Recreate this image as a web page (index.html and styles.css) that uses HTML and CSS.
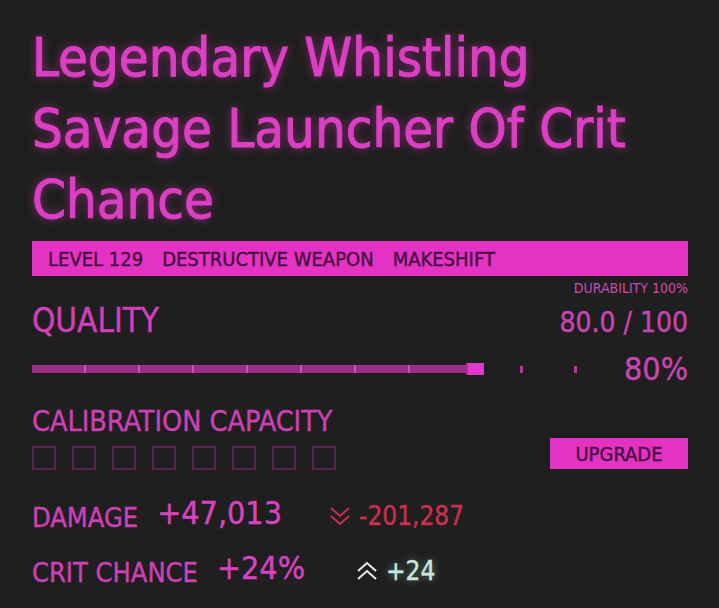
FILE: index.html
```html
<!DOCTYPE html>
<html>
<head>
<meta charset="utf-8">
<link rel="stylesheet" href="styles.css">
</head>
<body>
<div class="card">
  <h1 class="title">Legendary Whistling Savage Launcher Of Crit Chance</h1>
  <div class="tagbar"><span>LEVEL 129</span><span>DESTRUCTIVE WEAPON</span><span>MAKESHIFT</span></div>
  <div class="durability">DURABILITY 100%</div>
  <div class="quality-row">
    <div class="quality-label">QUALITY</div>
    <div class="quality-value">80.0 / 100</div>
  </div>
  <div class="progress-row">
    <div class="track">
      <div class="seg"></div><div class="tick"></div>
      <div class="seg"></div><div class="tick"></div>
      <div class="seg"></div><div class="tick"></div>
      <div class="seg"></div><div class="tick"></div>
      <div class="seg"></div><div class="tick"></div>
      <div class="seg"></div><div class="tick"></div>
      <div class="seg"></div><div class="tick"></div>
      <div class="seg last"></div>
      <div class="knob"></div>
      <div class="empty-tick first"></div>
      <div class="empty-tick"></div>
    </div>
    <div class="percent">80%</div>
  </div>
  <div class="calib-row">
    <div class="calib-left">
      <div class="calib-label">CALIBRATION CAPACITY</div>
      <div class="slots">
        <div class="slot"></div><div class="slot"></div><div class="slot"></div><div class="slot"></div>
        <div class="slot"></div><div class="slot"></div><div class="slot"></div><div class="slot"></div>
      </div>
    </div>
    <div class="upgrade">UPGRADE</div>
  </div>
  <div class="stat damage">
    <span class="stat-label">DAMAGE</span>
    <span class="stat-value">+47,013</span>
    <span class="delta down">
      <svg class="chev" width="22" height="22" viewBox="0 0 22 22"><path d="M2 3 L11 11 L20 3 M2 11 L11 19 L20 11" fill="none" stroke="currentColor" stroke-width="2"/></svg>
      -201,287
    </span>
  </div>
  <div class="stat crit">
    <span class="stat-label">CRIT CHANCE</span>
    <span class="stat-value">+24%</span>
    <span class="delta up">
      <svg class="chev" width="22" height="22" viewBox="0 0 22 22"><path d="M2 11 L11 3 L20 11 M2 19 L11 11 L20 19" fill="none" stroke="currentColor" stroke-width="2"/></svg>
      <span class="up-text">+24</span>
    </span>
  </div>
</div>
</body>
</html>
```
FILE: styles.css
```css
html, body {
  margin: 0;
  padding: 0;
  background: #1f1f1f;
}
body {
  font-family: "DejaVu Sans Condensed", "Liberation Sans Narrow", "DejaVu Sans", sans-serif;
  width: 719px;
  height: 608px;
  overflow: hidden;
  -webkit-text-stroke: 0.4px currentColor;
}
.card {
  padding: 22px 31px 0 32px;
}
.title {
  margin: 0;
  font-weight: normal;
  font-size: 54px;
  line-height: 71px;
  letter-spacing: 0;
  color: #dc3fc3;
  -webkit-text-stroke: 1px #dc3fc3;
  text-shadow: 0 0 10px rgba(214, 50, 180, 0.65);
}
.tagbar {
  margin-top: 6px;
  height: 35px;
  background: #e332c4;
  display: flex;
  align-items: center;
  gap: 19px;
  padding-left: 16px;
  font-size: 20px;
  color: #45103c;
}
.durability {
  text-align: right;
  font-size: 14px;
  color: #c94bb4;
  margin-top: 5px;
  line-height: 15px;
  -webkit-text-stroke: 0;
}
.quality-row {
  display: flex;
  justify-content: space-between;
  align-items: baseline;
  margin-top: 5px;
  line-height: 40px;
}
.quality-label {
  font-size: 33px;
  color: #d23fba;
}
.quality-value {
  font-size: 28px;
  color: #c945b2;
}
.progress-row {
  display: flex;
  justify-content: space-between;
  align-items: center;
  margin-top: 6px;
  height: 40px;
}
.track {
  display: flex;
  align-items: center;
  height: 12px;
}
.seg {
  width: 52px;
  height: 8px;
  background: #9a2d88;
}
.seg.last {
  width: 56px;
}
.tick {
  width: 2px;
  height: 8px;
  background: #d447bd;
}
.knob {
  width: 16px;
  height: 12px;
  background: #e13ac6;
  border-left: 2px solid #a82f92;
}
.empty-tick {
  width: 3px;
  height: 7px;
  background: #b7399e;
  margin-left: 51px;
}
.empty-tick.first {
  margin-left: 36px;
}
.percent {
  font-size: 32px;
  color: #c945b2;
}
.calib-row {
  display: flex;
  justify-content: space-between;
  align-items: flex-end;
  margin-top: 17px;
}
.calib-label {
  font-size: 28.5px;
  color: #cd40b6;
  line-height: 32px;
}
.slots {
  display: flex;
  gap: 16px;
  margin-top: 8px;
}
.slot {
  width: 20px;
  height: 20px;
  border: 2px solid #5a2551;
}
.upgrade {
  width: 138px;
  height: 31px;
  background: #e332c4;
  color: #45103c;
  font-size: 20px;
  display: flex;
  align-items: center;
  justify-content: center;
  margin-bottom: 1px;
}
.stat {
  display: flex;
  align-items: baseline;
  line-height: 40px;
}
.damage {
  margin-top: 26px;
}
.crit {
  margin-top: 13px;
}
.stat-label {
  font-size: 27px;
  color: #cd40b6;
}
.stat-value {
  font-size: 32px;
  color: #d842c0;
  margin-left: 19px;
  position: relative;
  top: -3px;
}
.delta {
  font-size: 26px;
  display: inline-flex;
  align-items: center;
  gap: 8px;
  margin-left: 51px;
}
.delta.down {
  color: #c9304f;
  margin-left: 47px;
}
.delta.up {
  color: #e6f2ee;
}
.up-text {
  color: #c9e6dd;
  text-shadow: 0 0 8px rgba(170, 230, 210, 0.55);
}
.chev {
  display: block;
}
```
